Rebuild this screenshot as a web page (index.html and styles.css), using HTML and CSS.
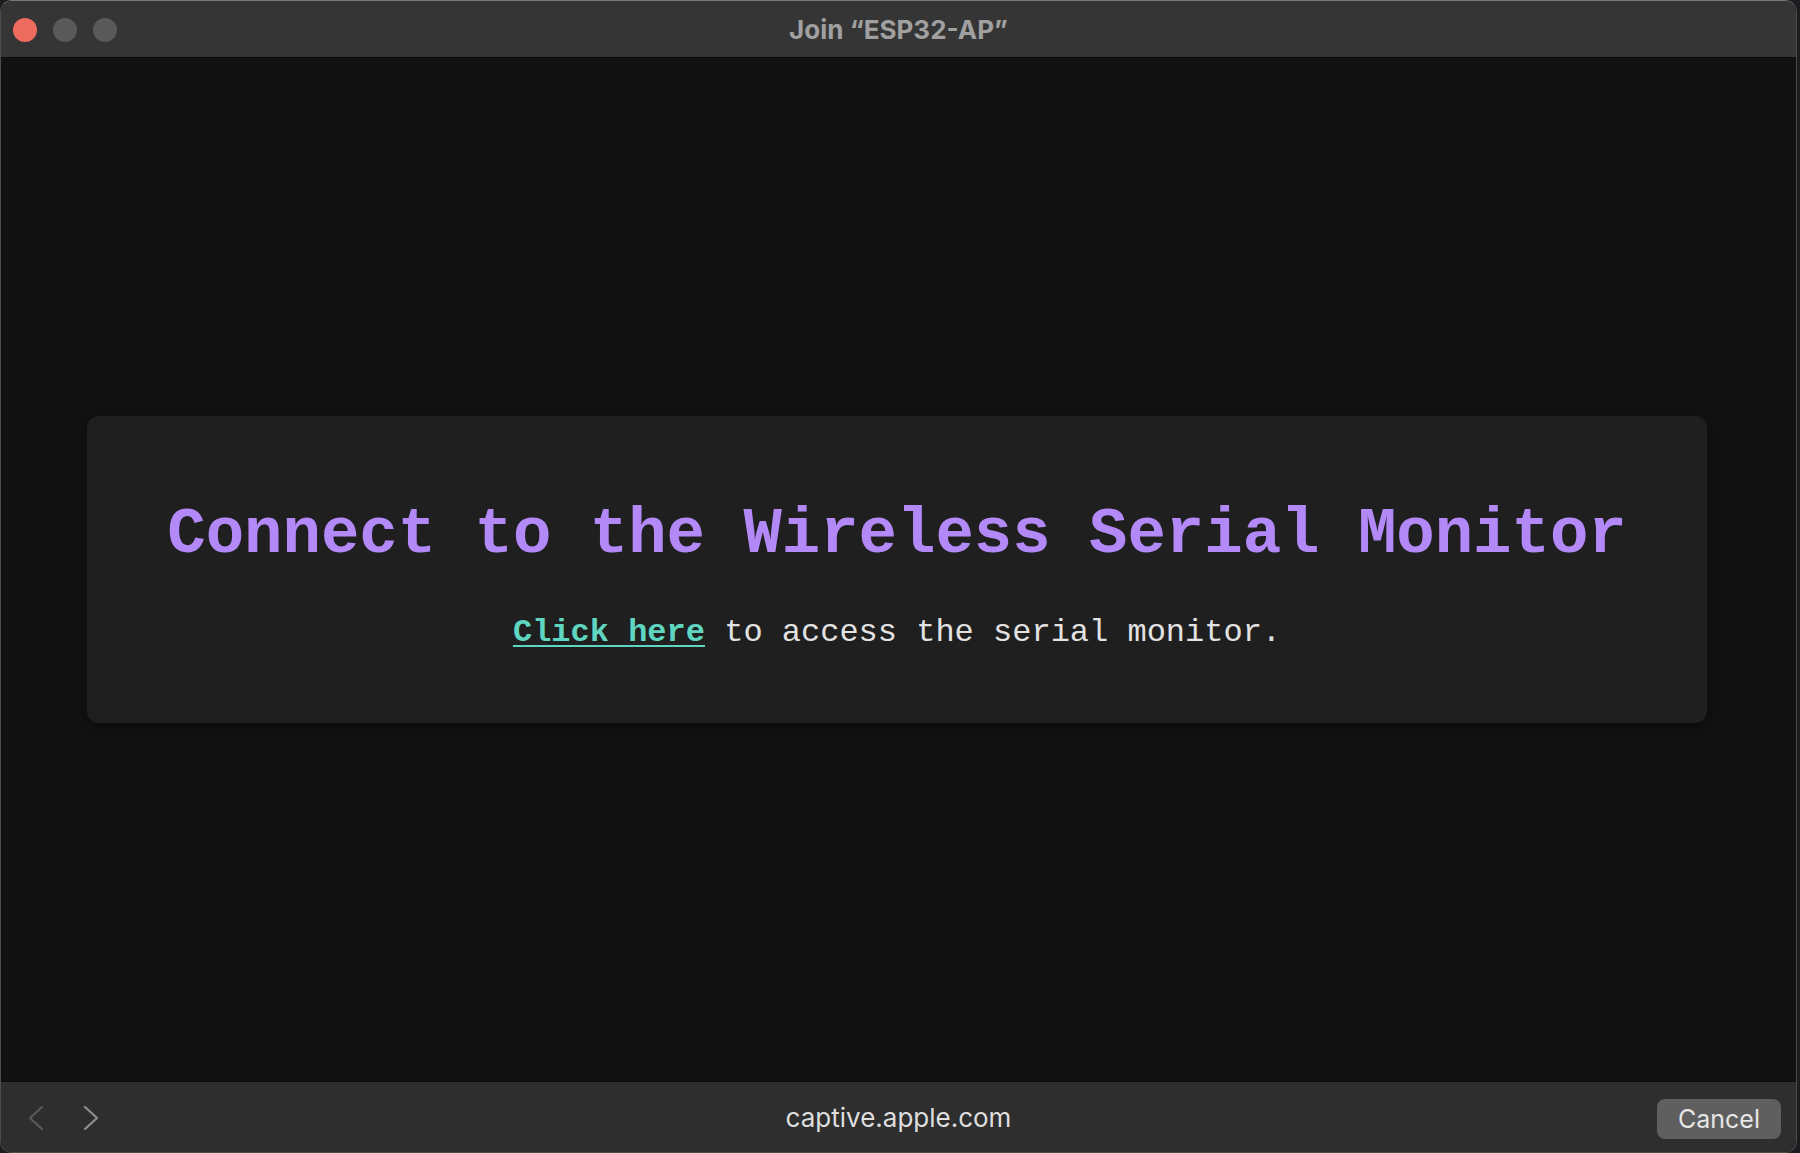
FILE: index.html
```html
<!DOCTYPE html>
<html lang="en">
<head>
<meta charset="utf-8">
<title>Join “ESP32-AP”</title>
<link rel="stylesheet" href="styles.css">
</head>
<body>
<div class="window">
  <header class="titlebar">
    <div class="lights">
      <span class="light red"></span>
      <span class="light gray"></span>
      <span class="light gray"></span>
    </div>
    <div class="title">Join “ESP32-AP”</div>
    <div class="spacer"></div>
  </header>
  <main class="content">
    <section class="card">
      <h1 class="heading">Connect to the Wireless Serial Monitor</h1>
      <p class="lead"><a class="link" href="#">Click here</a> to access the serial monitor.</p>
    </section>
  </main>
  <footer class="bottombar">
    <div class="nav">
      <svg class="chev back" width="16" height="24" viewBox="0 0 16 24"><path d="M14 1 L2 12 L14 23" fill="none" stroke="currentColor" stroke-width="2.2" stroke-linecap="round" stroke-linejoin="round"/></svg>
      <svg class="chev fwd" width="16" height="24" viewBox="0 0 16 24"><path d="M2 1 L14 12 L2 23" fill="none" stroke="currentColor" stroke-width="2.2" stroke-linecap="round" stroke-linejoin="round"/></svg>
    </div>
    <div class="url">captive.apple.com</div>
    <div class="actions"><button class="cancel">Cancel</button></div>
  </footer>
</div>
</body>
</html>
```
FILE: styles.css
```css
html, body {
  margin: 0;
  padding: 0;
  background: #1a1c20;
  width: 1800px;
  height: 1153px;
  overflow: hidden;
}

.window {
  width: 1797px;
  height: 1153px;
  box-sizing: border-box;
  border: 1px solid #4c4c4c;
  border-top-color: #777777;
  border-radius: 12px;
  overflow: hidden;
  display: flex;
  flex-direction: column;
  background: #121212;
  font-family: Inter, "Noto Sans", sans-serif;
}

.titlebar {
  height: 56px;
  flex: none;
  background: #353535;
  border-bottom: 1px solid #0b0b0b;
  display: grid;
  grid-template-columns: 1fr auto 1fr;
  align-items: center;
}

.lights {
  display: flex;
  gap: 16px;
  padding-left: 12px;
  padding-top: 1px;
}

.light {
  width: 24px;
  height: 24px;
  border-radius: 50%;
  background: #595959;
}

.light.red {
  background: #ee6b5f;
}

.title {
  font-size: 26px;
  font-weight: 700;
  color: #a0a0a0;
}

.content {
  flex: 1;
  background: #121212;
  display: flex;
  align-items: center;
  justify-content: center;
}

.card {
  width: 1620px;
  box-sizing: border-box;
  padding: 40px;
  background: #1f1f1f;
  border-radius: 12px;
  box-shadow: 0 4px 20px rgba(0, 0, 0, 0.45);
  text-align: center;
  font-family: "Liberation Mono", "Courier New", monospace;
  margin-left: -3px;
}

.heading {
  font-size: 64px;
  font-weight: bold;
  color: #b388f7;
  margin: 0.67em 0;
}

.lead {
  font-size: 32px;
  color: #e2e2e2;
  margin: 1em 0;
}

.link {
  color: #5fd6c1;
  font-weight: bold;
  text-decoration: underline;
  text-decoration-thickness: 2px;
  text-underline-offset: 4px;
}

.bottombar {
  height: 70px;
  flex: none;
  background: #2e2e2e;
  border-top: 1px solid #0b0b0b;
  display: grid;
  grid-template-columns: 1fr auto 1fr;
  align-items: center;
}

.nav {
  display: flex;
  align-items: center;
  gap: 39px;
  padding-left: 27px;
  padding-top: 2px;
}

.chev.back {
  color: #595959;
}

.chev.fwd {
  color: #8e8e8e;
}

.url {
  font-size: 26px;
  color: #dedede;
  padding-top: 1px;
}

.actions {
  display: flex;
  justify-content: flex-end;
  padding-right: 15px;
}

.cancel {
  width: 124px;
  height: 40px;
  border: none;
  border-radius: 8px;
  background: #5f5f5f;
  color: #e6e6e6;
  font-family: Inter, "Noto Sans", sans-serif;
  font-size: 25px;
  padding: 0;
  margin-top: 3px;
}
```
